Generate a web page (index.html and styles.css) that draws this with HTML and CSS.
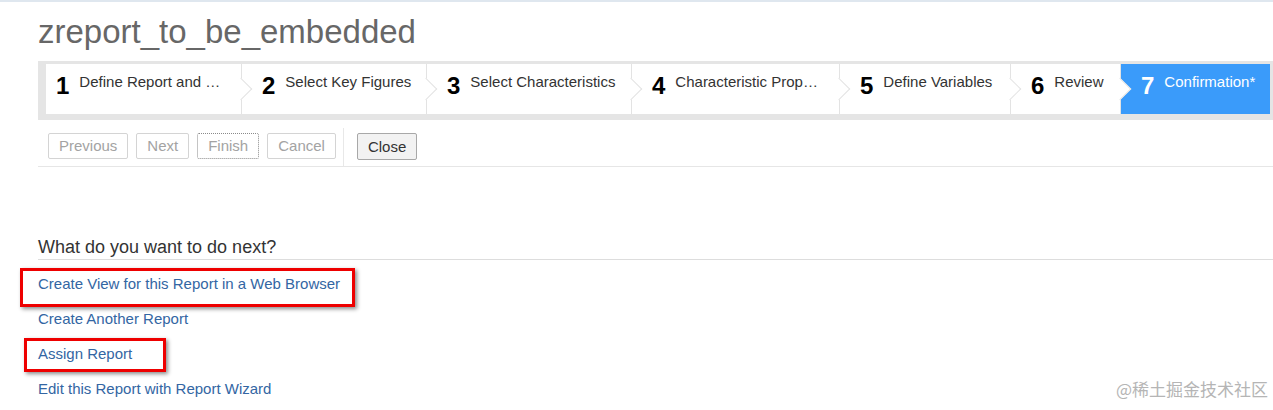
FILE: index.html
```html
<!DOCTYPE html>
<html lang="en">
<head>
<meta charset="utf-8">
<title>zreport_to_be_embedded</title>
<link rel="stylesheet" href="styles.css">
</head>
<body>
<div class="topline"></div>
<main class="page">
  <h1 class="title">zreport_to_be_embedded</h1>
  <div class="roadmap">
    <div class="step s1"><span class="num">1</span><span class="label">Define Report and …</span></div>
    <div class="step s2"><span class="num">2</span><span class="label">Select Key Figures</span></div>
    <div class="step s3"><span class="num">3</span><span class="label">Select Characteristics</span></div>
    <div class="step s4"><span class="num">4</span><span class="label">Characteristic Prop…</span></div>
    <div class="step s5"><span class="num">5</span><span class="label">Define Variables</span></div>
    <div class="step s6"><span class="num">6</span><span class="label">Review</span></div>
    <div class="step s7 active"><span class="num">7</span><span class="label">Confirmation*</span></div>
  </div>
  <div class="toolbar">
    <button class="btn disabled">Previous</button>
    <button class="btn disabled">Next</button>
    <button class="btn disabled focus">Finish</button>
    <button class="btn disabled">Cancel</button>
    <span class="sep"></span>
    <button class="btn primary">Close</button>
  </div>
  <h2 class="next-title">What do you want to do next?</h2>
  <ul class="links">
    <li><a href="#">Create View for this Report in a Web Browser</a></li>
    <li><a href="#">Create Another Report</a></li>
    <li><a href="#">Assign Report</a></li>
    <li><a href="#">Edit this Report with Report Wizard</a></li>
  </ul>
</main>
<div class="mark mark1"></div>
<div class="mark mark2"></div>
<div class="watermark">@稀土掘金技术社区</div>
</body>
</html>
```
FILE: styles.css
```css
html, body {
  margin: 0;
  padding: 0;
  background: #ffffff;
  font-family: "Liberation Sans", Arial, sans-serif;
  width: 1273px;
  height: 410px;
  overflow: hidden;
  position: relative;
}
.topline {
  height: 2px;
  background: #dfe7ef;
}
.page {
  padding-left: 38px;
}
.title {
  margin: 10px 0 9px 0;
  font-size: 33px;
  line-height: 40px;
  font-weight: normal;
  color: #676767;
}
.roadmap {
  display: flex;
  background: #e5e5e5;
  padding: 3px 3px 6px 8px;
  height: 50px;
}
.step {
  position: relative;
  display: flex;
  align-items: flex-start;
  gap: 10px;
  box-sizing: border-box;
  padding: 9px 0 0 20px;
  background: #ffffff;
  border-right: 1px solid #e3e3e3;
  white-space: nowrap;
  overflow: visible;
}
.step::after {
  content: "";
  position: absolute;
  z-index: 1;
  right: -8px;
  top: 17px;
  width: 15px;
  height: 15px;
  background: #ffffff;
  border-top: 1px solid #e3e3e3;
  border-right: 1px solid #e3e3e3;
  transform: rotate(45deg);
}
.s1 { width: 196px; padding-left: 10px; }
.s2 { width: 185px; }
.s3 { width: 205px; }
.s4 { width: 208px; }
.s5 { width: 171px; }
.s6 { width: 110px; }
.s7 { width: 149px; border-right: none; }
.step.active {
  background: #3a9bfa;
}
.step.active::after {
  display: none;
}
.num {
  font-size: 24px;
  line-height: 24px;
  font-weight: bold;
  color: #000000;
  margin-top: 1px;
}
.label {
  font-size: 15px;
  line-height: 18px;
  color: #333333;
}
.active .num,
.active .label {
  color: #ffffff;
}
.toolbar {
  display: flex;
  align-items: flex-start;
  margin-top: 8px;
  padding-left: 10px;
  border-bottom: 1px solid #e6e6e6;
  height: 38px;
}
.btn {
  font-family: "Liberation Sans", Arial, sans-serif;
  font-size: 15px;
  height: 26px;
  margin: 5px 8px 0 0;
  padding: 0 10px;
  background: #ffffff;
  border: 1px solid #d4d4d4;
  border-radius: 2px;
  color: #a3a3a3;
  line-height: 24px;
}
.btn.focus {
  border: 1px dotted #8a8a8a;
}
.sep {
  align-self: stretch;
  width: 1px;
  background: #e8e8e8;
  margin: 0 13px 0 -1px;
}
.btn.primary {
  height: 27px;
  background: #f2f2f2;
  border: 1px solid #a8a8a8;
  color: #333333;
}
.next-title {
  margin: 69px 0 0 0;
  font-size: 18px;
  line-height: 22px;
  font-weight: normal;
  color: #333333;
  padding-bottom: 1px;
  border-bottom: 1px solid #dddddd;
}
.links {
  list-style: none;
  margin: 0;
  padding: 6px 0 0 0;
}
.links li {
  font-size: 15px;
  line-height: 35px;
}
.links a {
  color: #3366a3;
  text-decoration: none;
}
.mark {
  position: absolute;
  border: 3px solid #ee0000;
  box-shadow: 2px 2px 4px rgba(0, 0, 0, 0.45);
  box-sizing: border-box;
}
.mark1 {
  left: 20px;
  top: 268px;
  width: 335px;
  height: 39px;
}
.mark2 {
  left: 24px;
  top: 338px;
  width: 142px;
  height: 34px;
}
.watermark {
  position: absolute;
  right: 5px;
  top: 378px;
  font-family: "Noto Sans CJK SC", sans-serif;
  font-size: 17px;
  line-height: 22px;
  color: #b5b5b5;
}
```
